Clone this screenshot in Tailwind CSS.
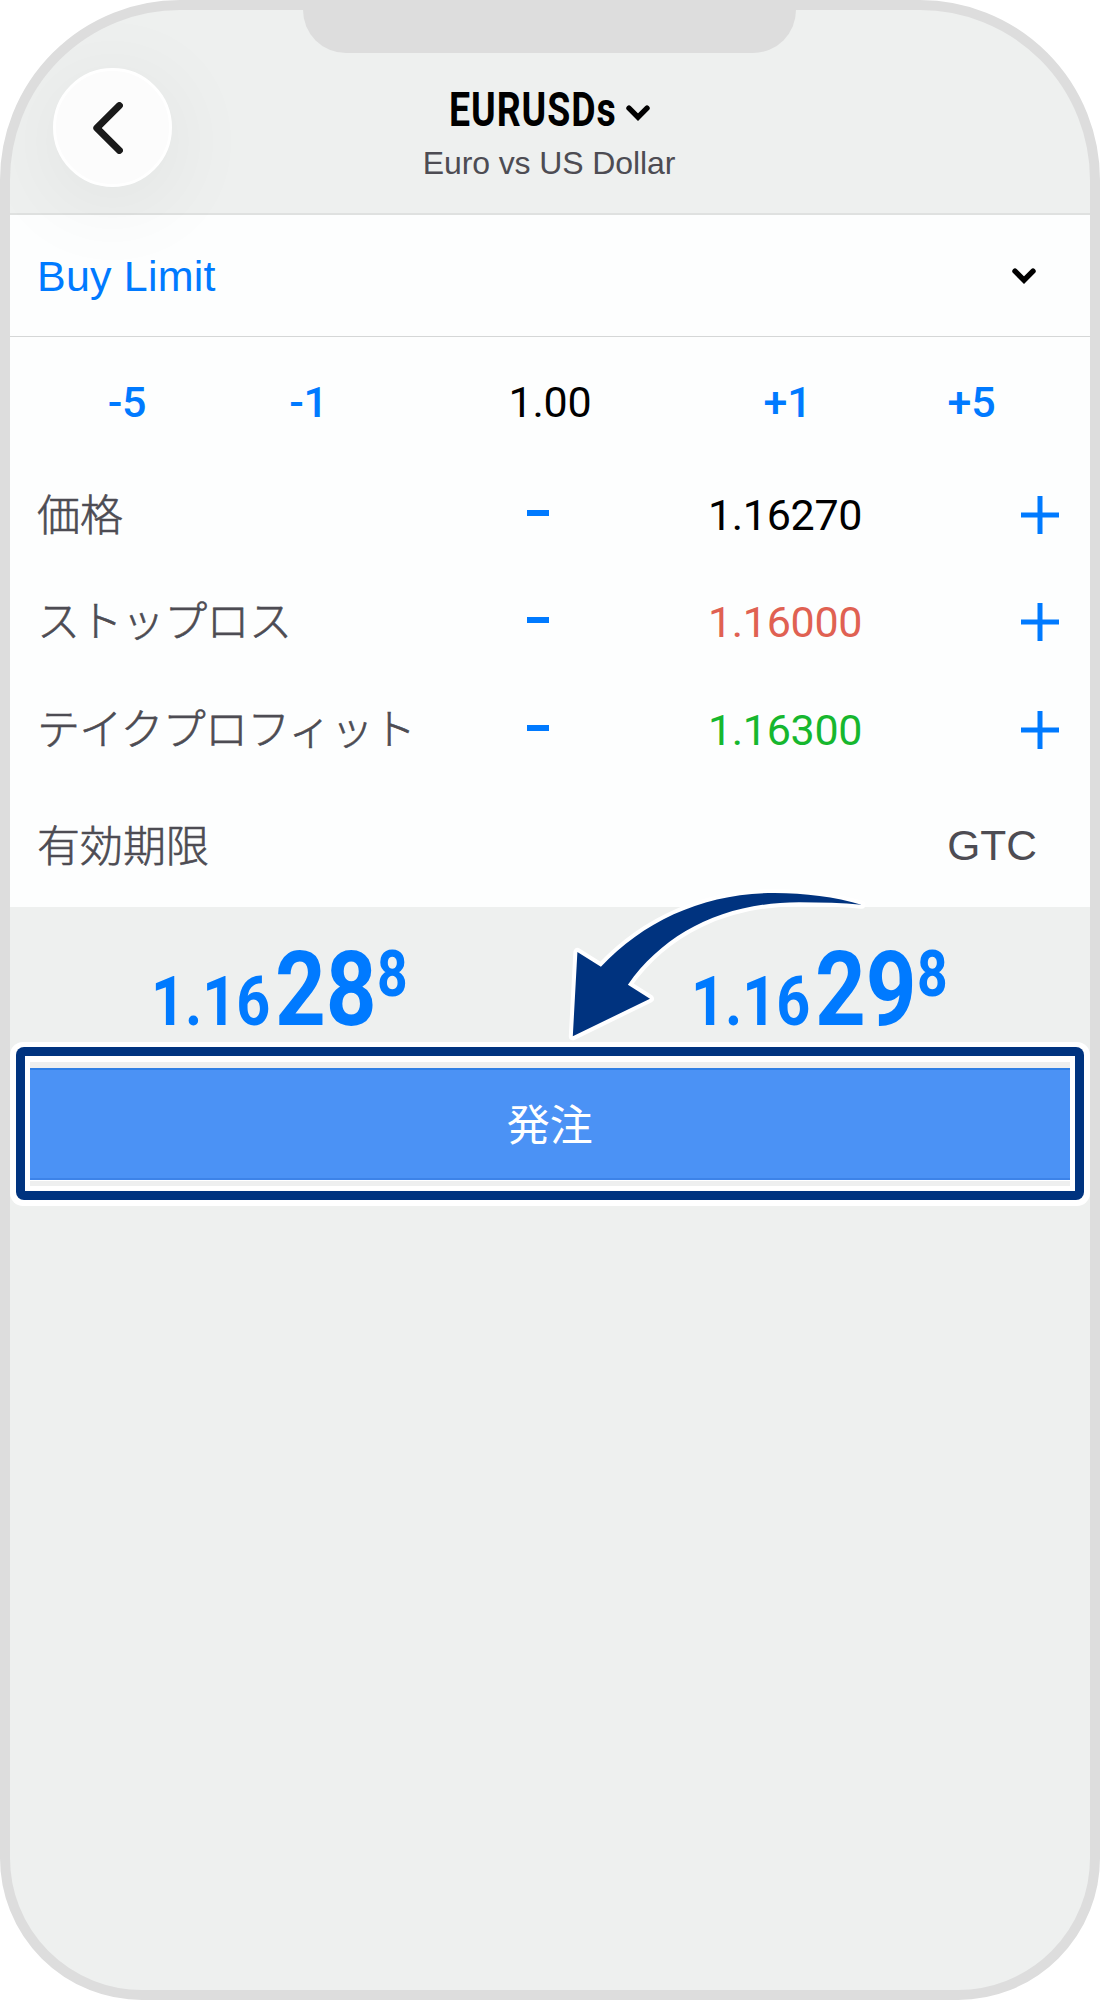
<!DOCTYPE html>
<html lang="ja">
<head>
<meta charset="utf-8">
<title>EURUSDs</title>
<script src="https://cdn.jsdelivr.net/npm/@tailwindcss/browser@4"></script>
</head>
<body class="bg-white">
<div class="relative flex h-[2000px] w-[1100px] flex-col overflow-hidden rounded-t-[180px] rounded-b-[142px] border-[10px] border-[#dddddd] bg-[#eef0ef] font-['Liberation_Sans',sans-serif] text-[#4d4c53]">
  <!-- Notch -->
  <div class="absolute top-0 left-[293px] h-[43px] w-[493px] rounded-b-[44px] bg-[#dddddd]"></div>

  <header class="grid h-[205px] shrink-0 grid-cols-[1fr_auto_1fr] border-b-2 border-[#dfe1e0]">
    <div class="relative z-10 pt-[58px] pl-[43px]">
      <button class="flex size-[119px] items-center justify-center rounded-full border-[3px] border-white bg-[#fcfcfc] shadow-[0_14px_90px_6px_rgba(0,0,10,0.055)]">
        <svg class="mr-[9px] h-[52px] w-[30px]" viewBox="0 0 30 52" fill="none" stroke="#1a1a1a" stroke-width="7" stroke-linecap="round" stroke-linejoin="round"><path d="M26.4 3.6 3.8 26 26.4 48.4"/></svg>
      </button>
    </div>
    <div class="flex flex-col items-center pt-[70px]">
      <div class="flex items-center">
        <div class="w-[177px] text-[49px] leading-[60px] font-bold text-black"><span class="block w-max origin-left scale-x-[0.765] font-['Roboto',sans-serif] tracking-[1.2px]">EURUSDs</span></div>
        <svg class="mt-[6px] h-[16px] w-[24px]" viewBox="0 0 24 16" fill="none" stroke="#000" stroke-width="5.4" stroke-linecap="round"><path d="M3 3.2 12 12.2 21 3.2"/></svg>
      </div>
      <div class="mt-[3px] mr-[2px] text-[32px] leading-[40px] tracking-[-0.1px]">Euro vs US Dollar</div>
    </div>
  </header>

  <main class="h-[691.7px] shrink-0 bg-[#fdfefe]">
    <div class="flex h-[122px] items-center justify-between border-b border-[#d5d7d7] pr-[54px] pl-[27px]">
      <span class="pt-[2px] text-[43px] tracking-[0.2px] text-[#007aff]">Buy Limit</span>
      <svg class="h-[16px] w-[24px]" viewBox="0 0 24 16" fill="none" stroke="#000" stroke-width="5.4" stroke-linecap="round"><path d="M3 3.2 12 12.2 21 3.2"/></svg>
    </div>

    <div class="grid h-[124.3px] grid-cols-[234px_124px_364px_106px_1fr] items-center pt-[6px] text-center font-['Roboto',sans-serif] text-[43px] font-medium tracking-[-0.2px] text-[#007aff]">
      <span>-5</span><span class="pl-[5px]">-1</span><span class="font-normal text-black">1.00</span><span class="pl-[5px]">+1</span><span class="pl-[15px]">+5</span>
    </div>

    <div class="grid h-[107.4px] grid-cols-[467px_121.5px_373px_1fr] items-center justify-items-center">
      <span class="-translate-y-[3px] justify-self-start pl-[27px] font-['Noto_Sans_CJK_JP',sans-serif] text-[43px] leading-[60px] font-light [-webkit-text-stroke:0.6px_#4d4c53]">価格</span>
      <svg class="size-[38px]" viewBox="0 0 38 38" fill="#007aff"><path d="M8 14h22v6H8z"/></svg>
      <span class="font-['Roboto',sans-serif] text-[43px] tracking-[-0.3px] text-black">1.16270</span>
      <svg class="ml-[18.5px] size-[38px]" viewBox="0 0 38 38" stroke="#007aff" stroke-width="5"><path d="M19 0v38M0 19h38"/></svg>
    </div>
    <div class="grid h-[107.4px] grid-cols-[467px_121.5px_373px_1fr] items-center justify-items-center">
      <span class="-translate-y-[4px] justify-self-start pl-[27px] font-['Noto_Sans_CJK_JP',sans-serif] text-[43px] leading-[60px] font-light tracking-[-0.6px] [-webkit-text-stroke:0.6px_#4d4c53]">ストップロス</span>
      <svg class="size-[38px]" viewBox="0 0 38 38" fill="#007aff"><path d="M8 14h22v6H8z"/></svg>
      <span class="font-['Roboto',sans-serif] text-[43px] tracking-[-0.3px] text-[#e06152]">1.16000</span>
      <svg class="ml-[18.5px] size-[38px]" viewBox="0 0 38 38" stroke="#007aff" stroke-width="5"><path d="M19 0v38M0 19h38"/></svg>
    </div>
    <div class="grid h-[107.4px] grid-cols-[467px_121.5px_373px_1fr] items-center justify-items-center">
      <span class="-translate-y-[4px] justify-self-start pl-[27px] font-['Noto_Sans_CJK_JP',sans-serif] text-[43px] leading-[60px] font-light tracking-[-0.8px] [-webkit-text-stroke:0.6px_#4d4c53]">テイクプロフィット</span>
      <svg class="size-[38px]" viewBox="0 0 38 38" fill="#007aff"><path d="M8 14h22v6H8z"/></svg>
      <span class="font-['Roboto',sans-serif] text-[43px] tracking-[-0.3px] text-[#16b72e]">1.16300</span>
      <svg class="ml-[18.5px] size-[38px]" viewBox="0 0 38 38" stroke="#007aff" stroke-width="5"><path d="M19 0v38M0 19h38"/></svg>
    </div>

    <div class="flex h-[123.2px] items-center justify-between pr-[53px] pl-[27px]">
      <span class="-translate-y-[2px] font-['Noto_Sans_CJK_JP',sans-serif] text-[43px] leading-[60px] font-light [-webkit-text-stroke:0.6px_#4d4c53]">有効期限</span>
      <span class="pt-[2px] text-[42.5px]">GTC</span>
    </div>
  </main>

  <!-- Bid / ask -->
  <section class="flex h-[135.3px] shrink-0 pt-[33px] font-['Roboto',sans-serif] text-[#007aff]">
    <div class="flex w-[540px] items-baseline pl-[141px]">
      <span class="w-[124px] text-[69px] leading-[100px] font-bold"><span class="inline-block w-max origin-left scale-x-[0.86]">1.16</span></span>
      <span class="w-[102px] text-[103px] leading-[100px] font-bold"><span class="inline-block w-max origin-left scale-x-[0.86]">28</span></span>
      <span class="-translate-y-[29px] text-[65px] leading-[80px] font-bold"><span class="inline-block w-max origin-left scale-x-[0.82]">8</span></span>
    </div>
    <div class="flex w-[540px] items-baseline pl-[141px]">
      <span class="w-[124px] text-[69px] leading-[100px] font-bold"><span class="inline-block w-max origin-left scale-x-[0.86]">1.16</span></span>
      <span class="w-[102px] text-[103px] leading-[100px] font-bold"><span class="inline-block w-max origin-left scale-x-[0.86]">29</span></span>
      <span class="-translate-y-[29px] text-[65px] leading-[80px] font-bold"><span class="inline-block w-max origin-left scale-x-[0.82]">8</span></span>
    </div>
  </section>

  <!-- Highlighted submit button -->
  <div class="mr-[0.5px] shrink-0 rounded-[13px] bg-white p-[5.5px]">
    <div class="rounded-[8px] bg-[#00337f] p-[9px]">
      <div class="bg-white p-[5.5px]">
        <div class="bg-[#eeefef] pt-[6px] pb-[5px]">
          <button class="flex h-[113px] w-full items-center justify-center border-t-2 border-b border-t-[#2f7fe5] border-b-white bg-[#4b92f5] font-['Noto_Sans_CJK_JP',sans-serif] text-[43px] leading-[60px] text-white shadow-[inset_0_-2px_0_#3d83e8]"><span class="-translate-y-[3px]">発注</span></button>
        </div>
      </div>
    </div>
  </div>

  <!-- Pointer arrow -->
  <svg class="absolute top-[870px] left-[550px] h-[165px] w-[320px]" viewBox="560 880 320 165"><path d="M861.5 904.7C835 897 805 893 774.5 893 705 893 645 920 600.9 966.7L577.4 952 572.8 1036.3 650 998.7 627.9 984.7C665 932 725 902 800 902.3 822 902.3 842 903 861.5 904.7Z" fill="#00337f" stroke="#fff" stroke-width="8" stroke-linejoin="round" paint-order="stroke"/></svg>
</div>
</body>
</html>
